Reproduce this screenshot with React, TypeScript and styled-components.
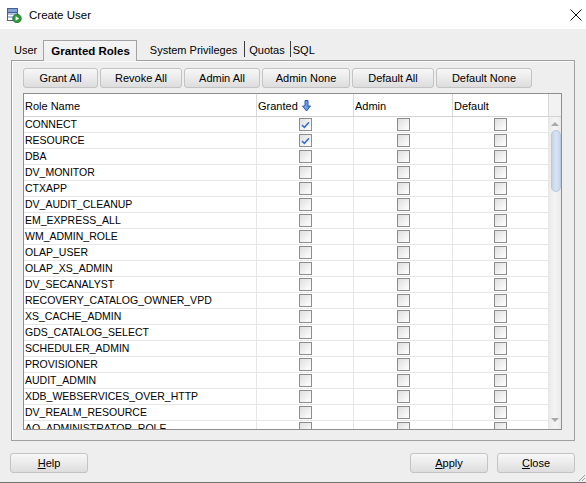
import styled, {createGlobalStyle} from "styled-components";

const GlobalStyle = createGlobalStyle`
  html, body {
    margin: 0;
    padding: 0;
    background: #eeeeee;
  }
  body {
    font-family: "Liberation Sans", Arial, sans-serif;
    color: #000;
  }
`;

const roles = [
  "CONNECT",
  "RESOURCE",
  "DBA",
  "DV_MONITOR",
  "CTXAPP",
  "DV_AUDIT_CLEANUP",
  "EM_EXPRESS_ALL",
  "WM_ADMIN_ROLE",
  "OLAP_USER",
  "OLAP_XS_ADMIN",
  "DV_SECANALYST",
  "RECOVERY_CATALOG_OWNER_VPD",
  "XS_CACHE_ADMIN",
  "GDS_CATALOG_SELECT",
  "SCHEDULER_ADMIN",
  "PROVISIONER",
  "AUDIT_ADMIN",
  "XDB_WEBSERVICES_OVER_HTTP",
  "DV_REALM_RESOURCE",
  "AQ_ADMINISTRATOR_ROLE",
];

const granted = ["CONNECT", "RESOURCE"];

const toolButtons = [
  {label: "Grant All", w: 75},
  {label: "Revoke All", w: 82},
  {label: "Admin All", w: 76},
  {label: "Admin None", w: 88},
  {label: "Default All", w: 82},
  {label: "Default None", w: 96},
];

const columns = "233px 97px 99px 96px";

const Window = styled.div`
  position: relative;
  width: 586px;
  height: 483px;
  box-sizing: border-box;
  display: flex;
  flex-direction: column;
  background: #eeeeee;
  border-bottom: 1px solid #707070;
  font-size: 11px;
`;

const TitleBar = styled.div`
  height: 29px;
  flex: none;
  display: flex;
  align-items: center;
  background: #fff;
  padding: 0 3px 0 6px;
`;

const TitleText = styled.div`
  margin-left: 7px;
  font-size: 11.5px;
  flex: 1;
`;

const CloseBox = styled.div`
  width: 14px;
  height: 14px;
  display: flex;
  align-items: center;
  justify-content: center;
`;

const Content = styled.div`
  flex: 1;
  display: flex;
  flex-direction: column;
  padding-top: 11px;
`;

const TabStrip = styled.div`
  height: 20px;
  display: flex;
  align-items: flex-end;
  padding-left: 14px;
`;

const Tab = styled.div<{ $active?: boolean; $pl?: number; $pr?: number }>`
  position: relative;
  z-index: ${p => (p.$active ? 1 : 0)};
  box-sizing: border-box;
  height: ${p => (p.$active ? 21 : 20)}px;
  line-height: ${p => (p.$active ? 21 : 20)}px;
  margin-bottom: ${p => (p.$active ? -1 : 0)}px;
  padding: 0 ${p => p.$pr ?? 0}px 0 ${p => p.$pl ?? 0}px;
  font-weight: ${p => (p.$active ? "bold" : "normal")};
  font-size: ${p => (p.$active ? 11.5 : 11)}px;
  border: ${p => (p.$active ? "1px solid #a3a3a3" : "none")};
  border-bottom: none;
  background: ${p => (p.$active ? "linear-gradient(#f4f4f4, #eeeeee)" : "transparent")};
  white-space: nowrap;
`;

const TabDivider = styled.div`
  width: 1px;
  height: 16px;
  margin-bottom: 3px;
  background: #3c3c3c;
`;

const Panel = styled.div`
  height: 381px;
  margin: 0 11px;
  box-sizing: border-box;
  border: 1px solid #a0a0a0;
  box-shadow: inset 1px 1px 0 #fafafa;
  padding: 7px 12px 10px 11px;
  display: flex;
  flex-direction: column;
  gap: 5px;
`;

const ButtonRow = styled.div`
  display: flex;
  gap: 2px;
`;

const Button = styled.div<{ $w: number }>`
  width: ${p => p.$w}px;
  height: 20px;
  box-sizing: border-box;
  border: 1px solid #c4c4c4;
  border-radius: 3px;
  background: linear-gradient(#f7f7f7, #ececec 45%, #dddddd);
  display: flex;
  align-items: center;
  justify-content: center;
  font-size: 11px;
  white-space: nowrap;
`;

const Table = styled.div`
  width: 539px;
  height: 337px;
  box-sizing: border-box;
  border: 1px solid #8e8e8e;
  background: #fff;
  display: flex;
  flex-direction: column;
  overflow: hidden;
  font-size: 10.5px;
`;

const HeaderRow = styled.div`
  display: grid;
  grid-template-columns: ${columns} 1fr;
  height: 23px;
  flex: none;
  box-sizing: border-box;
  border-bottom: 1px solid #d3d3d3;
`;

const HeaderCell = styled.div<{ $corner?: boolean }>`
  display: flex;
  align-items: center;
  gap: 4px;
  padding: 2px 0 0 1px;
  border-right: ${p => (p.$corner ? "none" : "1px solid #d8d8d8")};
  background: ${p => (p.$corner ? "#f2f2f2" : "#fff")};
  font-size: 11px;
`;

const Body = styled.div`
  flex: 1;
  display: flex;
  overflow: hidden;
`;

const Rows = styled.div`
  width: 525px;
  flex: none;
`;

const Row = styled.div`
  display: grid;
  grid-template-columns: ${columns};
  height: 16px;
  box-sizing: border-box;
  border-bottom: 1px solid #e6e6e6;
`;

const Cell = styled.div<{ $center?: boolean }>`
  display: flex;
  align-items: center;
  justify-content: ${p => (p.$center ? "center" : "flex-start")};
  padding: 0 0 ${p => (p.$center ? 0 : 2)}px ${p => (p.$center ? 0 : 1)}px;
  border-right: 1px solid #e6e6e6;
  white-space: nowrap;
`;

const Box = styled.div`
  width: 13px;
  height: 13px;
  flex: none;
  box-sizing: border-box;
  border: 1px solid #8d8d8d;
  background: linear-gradient(135deg, #dedede, #f6f6f6 70%, #fdfdfd);
  display: flex;
  align-items: center;
  justify-content: center;
`;

const Scrollbar = styled.div`
  flex: 1;
  background: linear-gradient(90deg, #eaeaea, #f4f4f4 50%, #eaeaea);
  display: flex;
  flex-direction: column;
  align-items: center;
  padding: 5px 0 5px;
`;

const ArrowUp = styled.div`
  width: 0;
  height: 0;
  border-left: 4px solid transparent;
  border-right: 4px solid transparent;
  border-bottom: 4px solid #a9a9a9;
`;

const ArrowDown = styled.div`
  width: 0;
  height: 0;
  border-left: 4px solid transparent;
  border-right: 4px solid transparent;
  border-top: 4px solid #a9a9a9;
  margin-top: auto;
  margin-bottom: 2px;
`;

const Thumb = styled.div`
  width: 10px;
  height: 62px;
  margin-top: 4px;
  margin-left: 1px;
  box-sizing: border-box;
  border: 1px solid #b7c8df;
  border-radius: 5px;
  background: linear-gradient(90deg, #c3d4ea, #d9e4f2 50%, #c6d6eb);
`;

const Footer = styled.div`
  flex: 1;
  display: flex;
  justify-content: space-between;
  align-items: flex-start;
  padding: 12px 11px 0 10px;
`;

const FooterGroup = styled.div`
  display: flex;
  gap: 9px;
`;

const Mnemonic = styled.span`
  text-decoration: underline;
`;

const Grip = styled.svg`
  position: absolute;
  right: 0;
  bottom: 0;
`;

const AppIcon = () => (
  <svg width="16" height="16" viewBox="0 0 16 16">
    <rect x="1.5" y="1.5" width="10" height="12" fill="#fff" stroke="#4a5f8c"/>
    <rect x="2" y="2" width="9" height="3" fill="#7fa3d4"/>
    <rect x="2" y="6" width="9" height="2" fill="#a9c3e6"/>
    <rect x="2" y="9" width="9" height="2" fill="#a9c3e6"/>
    <line x1="1.5" y1="5.5" x2="11.5" y2="5.5" stroke="#4a5f8c"/>
    <circle cx="11" cy="11.5" r="4.3" fill="#2f9a35" stroke="#1d6e22" strokeWidth="0.8"/>
    <path d="M9.6 9.2 L13.2 11.5 L9.6 13.8 Z" fill="#fff"/>
  </svg>
);

const CloseIcon = () => (
  <svg width="12" height="12" viewBox="0 0 12 12">
    <path d="M0.5 0.5 L11.5 11.5 M11.5 0.5 L0.5 11.5" stroke="#111" strokeWidth="1"/>
  </svg>
);

const SortArrow = () => (
  <svg width="9" height="12" viewBox="0 0 9 12">
    <defs>
      <linearGradient id="sortFill" x1="0" x2="1">
        <stop offset="0" stopColor="#9cc4f2"/>
        <stop offset="1" stopColor="#3f7fd6"/>
      </linearGradient>
    </defs>
    <path d="M3 0.5 H6 V6 H8.5 L4.5 11 L0.5 6 H3 Z" fill="url(#sortFill)" stroke="#2459b3" strokeWidth="1"/>
  </svg>
);

const Check = () => (
  <svg width="9" height="8" viewBox="0 0 9 8">
    <path d="M1 4.2 L3.4 6.4 L8 1.2" fill="none" stroke="#3b6fd0" strokeWidth="1.6"/>
  </svg>
);

const CheckBox = ({checked}: { checked?: boolean }) => (
  <Box>{checked && <Check/>}</Box>
);

const App = () => {
  return (
    <>
      <GlobalStyle/>
      <Window>
        <TitleBar>
          <AppIcon/>
          <TitleText>Create User</TitleText>
          <CloseBox><CloseIcon/></CloseBox>
        </TitleBar>
        <Content>
          <TabStrip>
            <Tab $pr={6}>User</Tab>
            <Tab $active $pl={7} $pr={6}>Granted Roles</Tab>
            <Tab $pl={13} $pr={7}>System Privileges</Tab>
            <TabDivider/>
            <Tab $pl={4} $pr={5}>Quotas</Tab>
            <TabDivider/>
            <Tab $pl={2}>SQL</Tab>
          </TabStrip>
          <Panel>
            <ButtonRow>
              {toolButtons.map(b => (
                <Button key={b.label} $w={b.w}>{b.label}</Button>
              ))}
            </ButtonRow>
            <Table>
              <HeaderRow>
                <HeaderCell>Role Name</HeaderCell>
                <HeaderCell>Granted <SortArrow/></HeaderCell>
                <HeaderCell>Admin</HeaderCell>
                <HeaderCell>Default</HeaderCell>
                <HeaderCell $corner/>
              </HeaderRow>
              <Body>
                <Rows>
                  {roles.map(role => (
                    <Row key={role}>
                      <Cell>{role}</Cell>
                      <Cell $center><CheckBox checked={granted.includes(role)}/></Cell>
                      <Cell $center><CheckBox/></Cell>
                      <Cell $center><CheckBox/></Cell>
                    </Row>
                  ))}
                </Rows>
                <Scrollbar>
                  <ArrowUp/>
                  <Thumb/>
                  <ArrowDown/>
                </Scrollbar>
              </Body>
            </Table>
          </Panel>
          <Footer>
            <Button $w={78}><Mnemonic>H</Mnemonic>elp</Button>
            <FooterGroup>
              <Button $w={78}><Mnemonic>A</Mnemonic>pply</Button>
              <Button $w={78}><Mnemonic>C</Mnemonic>lose</Button>
            </FooterGroup>
          </Footer>
        </Content>
        <Grip width="10" height="10" viewBox="0 0 10 10">
          <path d="M9 3 L3 9 M9 6 L6 9" stroke="#a0a0a0" strokeWidth="1"/>
        </Grip>
      </Window>
    </>
  );
};

export default App;
